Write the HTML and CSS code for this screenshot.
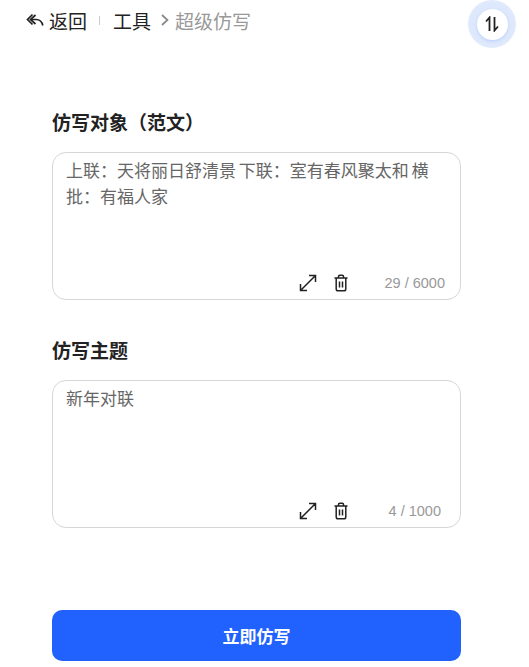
FILE: index.html
```html
<!DOCTYPE html>
<html lang="zh-CN">
<head>
  <meta charset="UTF-8" />
  <title>超级仿写</title>
  <link rel="stylesheet" href="styles.css">
</head>
<body>
  <header class="topbar">
    <a class="back">
      <svg class="back-icon" viewBox="0 0 18 14" width="18" height="14">
        <path d="M6.5 1.5 1.5 6.5 6.5 11.5" />
        <path d="M9.5 2 4.5 6.5 9.5 11" />
        <path d="M5 6.5H10Q15.5 6.5 16.8 12.5" />
      </svg>
      <span>返回</span>
    </a>
    <span class="divider"></span>
    <span class="crumb">工具</span>
    <svg class="crumb-arrow" viewBox="0 0 8 12" width="8" height="12">
      <path d="M1 1 6.5 6 1 11" />
    </svg>
    <span class="crumb-current">超级仿写</span>
  </header>

  <div class="switch-btn">
    <div class="switch-inner">
      <svg viewBox="0 0 14 16" width="14" height="16">
        <path d="M4.5 15V1.5L1 5.5" />
        <path d="M9.5 1V14.5L13 10.5" />
      </svg>
    </div>
  </div>

  <main class="form">
    <section class="field">
      <h2>仿写对象（范文）</h2>
      <div class="box">
        <div class="box-text">上联：天将丽日舒清景 下联：室有春风聚太和 横批：有福人家</div>
        <div class="box-tools">
          <svg class="tool" viewBox="0 0 18 18" width="18" height="18">
            <path d="M1.5 16.5 16.5 1.5M10 1.5H16.5V8M1.5 10V16.5H8" />
          </svg>
          <svg class="tool tool-trash" viewBox="0 0 16 18" width="16" height="18">
            <path d="M1.5 4H14.5M5.5 4V2.5Q5.5 1.2 6.8 1.2H9.2Q10.5 1.2 10.5 2.5V4M3.2 4V15Q3.2 16.8 5 16.8H11Q12.8 16.8 12.8 15V4M6.5 7.5V13.5M9.5 7.5V13.5" />
          </svg>
          <span class="count count-long">29 / 6000</span>
        </div>
      </div>
    </section>

    <section class="field">
      <h2>仿写主题</h2>
      <div class="box">
        <div class="box-text">新年对联</div>
        <div class="box-tools">
          <svg class="tool" viewBox="0 0 18 18" width="18" height="18">
            <path d="M1.5 16.5 16.5 1.5M10 1.5H16.5V8M1.5 10V16.5H8" />
          </svg>
          <svg class="tool tool-trash" viewBox="0 0 16 18" width="16" height="18">
            <path d="M1.5 4H14.5M5.5 4V2.5Q5.5 1.2 6.8 1.2H9.2Q10.5 1.2 10.5 2.5V4M3.2 4V15Q3.2 16.8 5 16.8H11Q12.8 16.8 12.8 15V4M6.5 7.5V13.5M9.5 7.5V13.5" />
          </svg>
          <span class="count">4 / 1000</span>
        </div>
      </div>
    </section>

    <button class="btn">立即仿写</button>
  </main>
</body>
</html>
```

FILE: styles.css
```css
* {
  box-sizing: border-box;
  font-family: "Liberation Sans", "Noto Sans CJK SC", sans-serif;
}
body {
  margin: 0;
  background: #fff;
  color: #222;
  height: 667px;
  overflow: hidden;
  position: relative;
}
.topbar {
  display: flex;
  align-items: center;
  height: 22px;
  margin-top: 9px;
  padding-left: 26px;
  font-size: 19px;
}
.back {
  display: flex;
  align-items: center;
  gap: 5px;
}
.back-icon path,
.crumb-arrow path {
  fill: none;
  stroke-width: 1.7;
}
.back-icon path {
  stroke: #222;
}
.divider {
  width: 1px;
  height: 9px;
  background: #ccc;
  margin: 0 13px 0 12px;
}
.crumb-arrow {
  margin: 0 6px 0 10px;
}
.crumb-arrow path {
  stroke: #888;
}
.crumb-current {
  color: #999;
}
.switch-btn {
  position: absolute;
  top: 0;
  left: 468px;
  width: 48px;
  height: 48px;
  border-radius: 50%;
  background: radial-gradient(circle, #dde8fc 60%, #eef3fe 100%);
  display: flex;
  align-items: center;
  justify-content: center;
}
.switch-inner {
  width: 31px;
  height: 31px;
  border-radius: 50%;
  background: #fff;
  box-shadow: 0 1px 3px rgba(33, 98, 255, 0.2);
  display: flex;
  align-items: center;
  justify-content: center;
}
.switch-inner path {
  fill: none;
  stroke: #222;
  stroke-width: 1.8;
}
.form {
  margin: 0 68px 0 52px;
  padding-top: 81px;
  display: flex;
  flex-direction: column;
}
.field {
  margin-bottom: 39.5px;
}
.field h2 {
  margin: 0 0 16px;
  font-size: 19px;
  line-height: 24px;
  font-weight: 700;
  color: #222;
}
.box {
  height: 148px;
  border: 1px solid #d6d6d6;
  border-radius: 14px;
  padding: 6px 13px;
  display: flex;
  flex-direction: column;
  justify-content: space-between;
}
.box-text {
  font-size: 17px;
  line-height: 26px;
  color: #666;
  word-spacing: -2px;
}
.box-tools {
  display: flex;
  align-items: center;
  justify-content: flex-end;
  padding-bottom: 1px;
}
.tool path {
  fill: none;
  stroke: #222;
  stroke-width: 1.5;
}
.tool-trash {
  margin-left: 16px;
}
.count {
  width: 98px;
  text-align: right;
  padding-right: 6px;
  font-size: 14.5px;
  color: #999;
}
.count-long {
  padding-right: 2px;
}
.btn {
  display: block;
  width: 100%;
  height: 51px;
  margin-top: 43px;
  background: #2162ff;
  color: #fff;
  border: none;
  border-radius: 10px;
  font-size: 17px;
  font-weight: 700;
}
```
